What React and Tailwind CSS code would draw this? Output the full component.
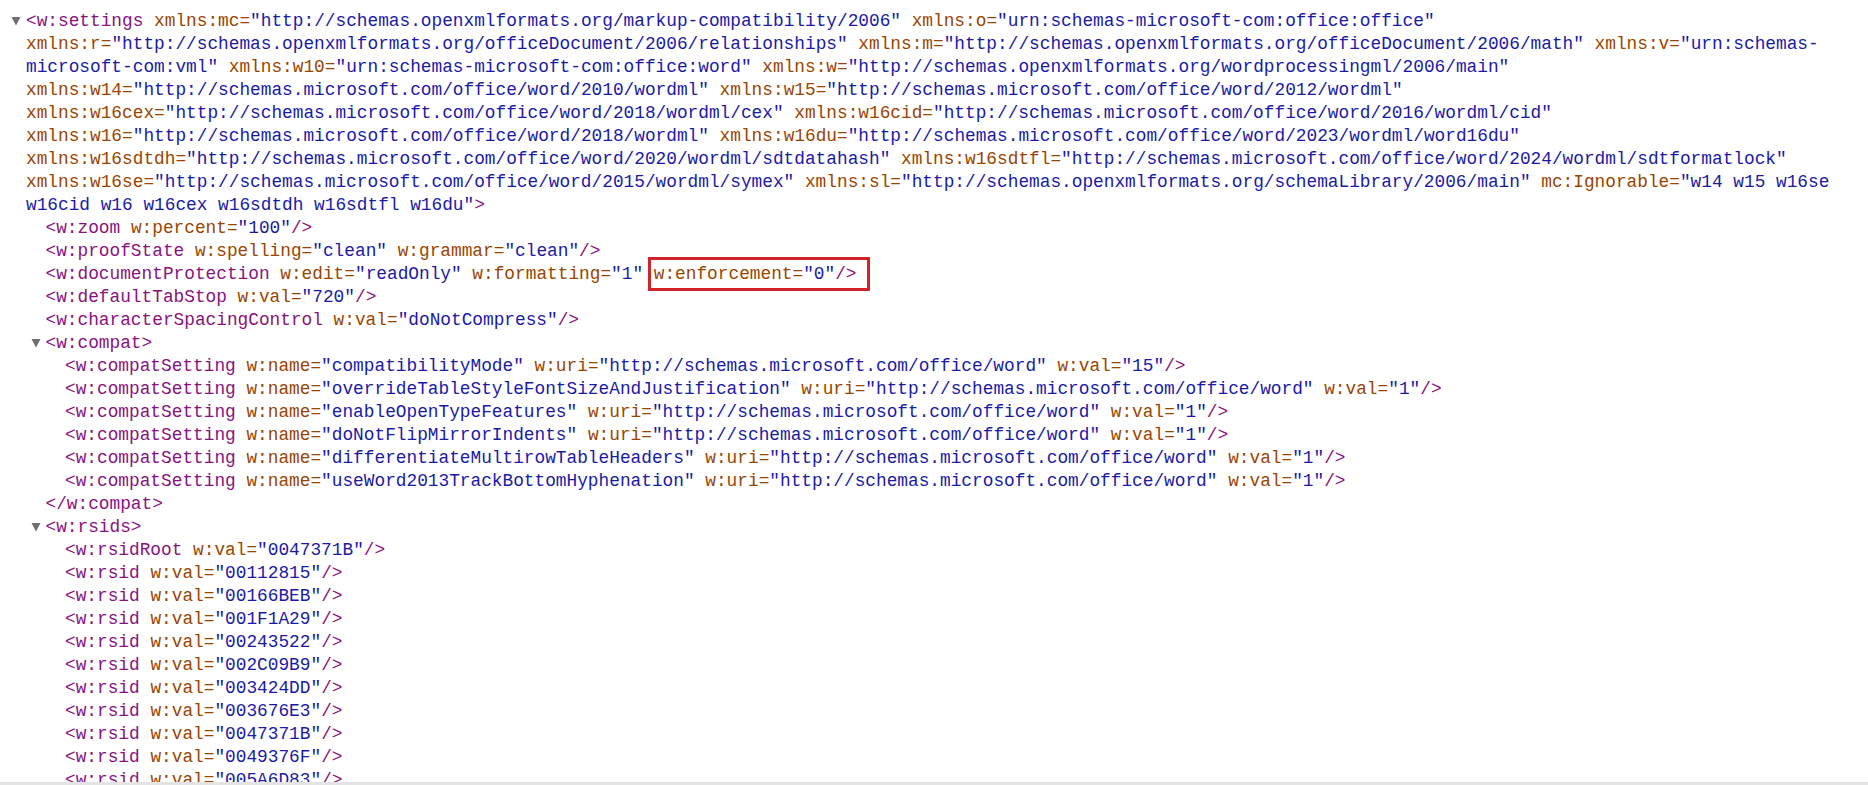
import React from "react";

// Chrome-style XML tree view of a word/settings.xml part

const Tag = ({ children }) => <span className="text-[#881280]">{children}</span>;
const Name = ({ children }) => <span className="text-[#994500]">{children}</span>;
const Val = ({ children }) => <span className="text-[#1a1aa6]">{children}</span>;

const Attr = ({ n, v }) => (
  <>
    {" "}
    <Name>{n}=</Name>
    <Val>"{v}"</Val>
  </>
);

const Arrow = () => (
  <span className="inline-block w-[15px] -ml-[15px] h-[23px] align-top">
    <svg width="10" height="10" viewBox="0 0 10 10" className="mt-[6px]">
      <path d="M0.5 1 L9.5 1 L5 9.5 Z" fill="#6f6f6f" />
    </svg>
  </span>
);

const Line = ({ level = 0, children }) => {
  const pad = level === 0 ? "pl-[26px]" : level === 1 ? "pl-[45.5px]" : "pl-[65px]";
  return <div className={`h-[23px] leading-[23px] whitespace-pre ${pad}`}>{children}</div>;
};

const compat = [
  ["compatibilityMode", "15"],
  ["overrideTableStyleFontSizeAndJustification", "1"],
  ["enableOpenTypeFeatures", "1"],
  ["doNotFlipMirrorIndents", "1"],
  ["differentiateMultirowTableHeaders", "1"],
  ["useWord2013TrackBottomHyphenation", "1"],
];

const rsids = [
  "00112815",
  "00166BEB",
  "001F1A29",
  "00243522",
  "002C09B9",
  "003424DD",
  "003676E3",
  "0047371B",
  "0049376F",
  "005A6D83",
];

const App = () => {
  return (
    <div className="w-[1868px] h-[785px] flex flex-col bg-white overflow-hidden">
      <div
        className="flex-1 overflow-hidden pt-[10px] text-[17.8px]"
        style={{ fontFamily: '"Liberation Mono", "DejaVu Sans Mono", monospace' }}
      >
        {/* root element, wrapped the way the viewer wraps it */}
        <Line>
          <Arrow />
          <Tag>{"<w:settings"}</Tag>
          <Attr n="xmlns:mc" v="http://schemas.openxmlformats.org/markup-compatibility/2006" />
          <Attr n="xmlns:o" v="urn:schemas-microsoft-com:office:office" />
        </Line>
        <Line>
          <Name>xmlns:r=</Name>
          <Val>"http://schemas.openxmlformats.org/officeDocument/2006/relationships"</Val>
          <Attr n="xmlns:m" v="http://schemas.openxmlformats.org/officeDocument/2006/math" />
          {" "}
          <Name>xmlns:v=</Name>
          <Val>"urn:schemas-</Val>
        </Line>
        <Line>
          <Val>microsoft-com:vml"</Val>
          <Attr n="xmlns:w10" v="urn:schemas-microsoft-com:office:word" />
          <Attr n="xmlns:w" v="http://schemas.openxmlformats.org/wordprocessingml/2006/main" />
        </Line>
        <Line>
          <Name>xmlns:w14=</Name>
          <Val>"http://schemas.microsoft.com/office/word/2010/wordml"</Val>
          <Attr n="xmlns:w15" v="http://schemas.microsoft.com/office/word/2012/wordml" />
        </Line>
        <Line>
          <Name>xmlns:w16cex=</Name>
          <Val>"http://schemas.microsoft.com/office/word/2018/wordml/cex"</Val>
          <Attr n="xmlns:w16cid" v="http://schemas.microsoft.com/office/word/2016/wordml/cid" />
        </Line>
        <Line>
          <Name>xmlns:w16=</Name>
          <Val>"http://schemas.microsoft.com/office/word/2018/wordml"</Val>
          <Attr n="xmlns:w16du" v="http://schemas.microsoft.com/office/word/2023/wordml/word16du" />
        </Line>
        <Line>
          <Name>xmlns:w16sdtdh=</Name>
          <Val>"http://schemas.microsoft.com/office/word/2020/wordml/sdtdatahash"</Val>
          <Attr n="xmlns:w16sdtfl" v="http://schemas.microsoft.com/office/word/2024/wordml/sdtformatlock" />
        </Line>
        <Line>
          <Name>xmlns:w16se=</Name>
          <Val>"http://schemas.microsoft.com/office/word/2015/wordml/symex"</Val>
          <Attr n="xmlns:sl" v="http://schemas.openxmlformats.org/schemaLibrary/2006/main" />
          {" "}
          <Name>mc:Ignorable=</Name>
          <Val>"w14 w15 w16se</Val>
        </Line>
        <Line>
          <Val>w16cid w16 w16cex w16sdtdh w16sdtfl w16du"</Val>
          <Tag>{">"}</Tag>
        </Line>

        {/* children */}
        <Line level={1}>
          <Tag>{"<w:zoom"}</Tag>
          <Attr n="w:percent" v="100" />
          <Tag>{"/>"}</Tag>
        </Line>
        <Line level={1}>
          <Tag>{"<w:proofState"}</Tag>
          <Attr n="w:spelling" v="clean" />
          <Attr n="w:grammar" v="clean" />
          <Tag>{"/>"}</Tag>
        </Line>
        <Line level={1}>
          <Tag>{"<w:documentProtection"}</Tag>
          <Attr n="w:edit" v="readOnly" />
          <Attr n="w:formatting" v="1" />
          {" "}
          <span className="relative">
            <Name>w:enforcement=</Name>
            <Val>"0"</Val>
            <Tag>{"/>"}</Tag>
            <span className="absolute -left-[6px] -right-[13px] -top-[7px] -bottom-[7px] border-[3px] border-[#d2232a]" />
          </span>
        </Line>
        <Line level={1}>
          <Tag>{"<w:defaultTabStop"}</Tag>
          <Attr n="w:val" v="720" />
          <Tag>{"/>"}</Tag>
        </Line>
        <Line level={1}>
          <Tag>{"<w:characterSpacingControl"}</Tag>
          <Attr n="w:val" v="doNotCompress" />
          <Tag>{"/>"}</Tag>
        </Line>

        <Line level={1}>
          <Arrow />
          <Tag>{"<w:compat>"}</Tag>
        </Line>
        {compat.map(([name, val]) => (
          <Line level={2} key={name}>
            <Tag>{"<w:compatSetting"}</Tag>
            <Attr n="w:name" v={name} />
            <Attr n="w:uri" v="http://schemas.microsoft.com/office/word" />
            <Attr n="w:val" v={val} />
            <Tag>{"/>"}</Tag>
          </Line>
        ))}
        <Line level={1}>
          <Tag>{"</w:compat>"}</Tag>
        </Line>

        <Line level={1}>
          <Arrow />
          <Tag>{"<w:rsids>"}</Tag>
        </Line>
        <Line level={2}>
          <Tag>{"<w:rsidRoot"}</Tag>
          <Attr n="w:val" v="0047371B" />
          <Tag>{"/>"}</Tag>
        </Line>
        {rsids.map((id) => (
          <Line level={2} key={id}>
            <Tag>{"<w:rsid"}</Tag>
            <Attr n="w:val" v={id} />
            <Tag>{"/>"}</Tag>
          </Line>
        ))}
      </div>
      <div className="h-[3px] bg-[#e4e4e4]" />
    </div>
  );
};

export default App;
